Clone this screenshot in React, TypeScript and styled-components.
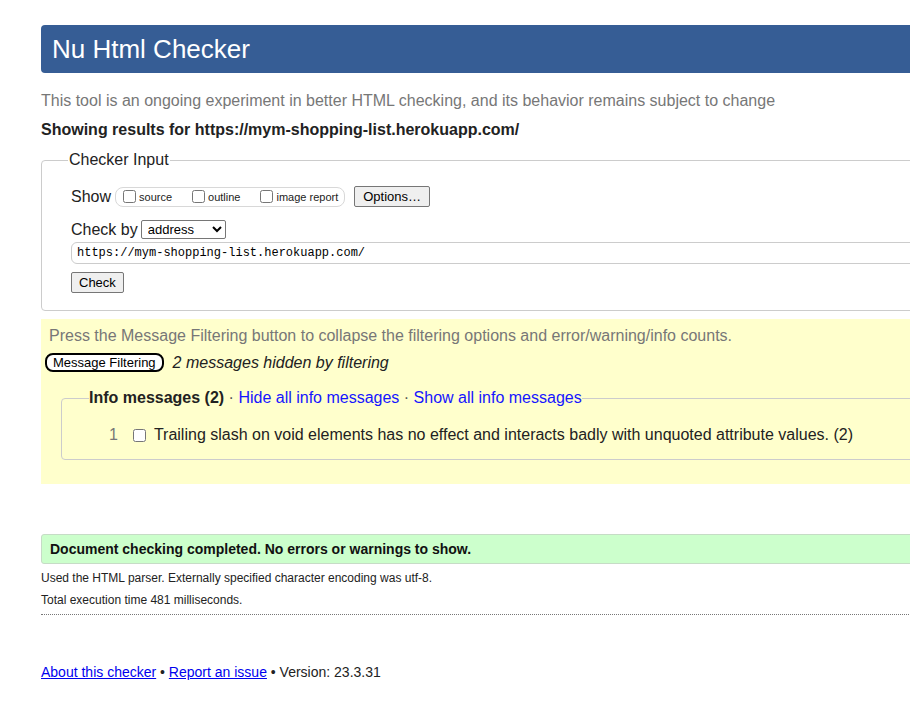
import styled, { createGlobalStyle } from "styled-components";

const GlobalStyle = createGlobalStyle`
  html, body {
    margin: 0;
    padding: 0;
    overflow: hidden;
    background: #fff;
  }
  body {
    font-family: "Liberation Sans", Arial, sans-serif;
    color: #222;
  }
`;

const Page = styled.div`
  width: 1000px;
  padding: 25px 0 0 41px;
`;

const Header = styled.h1`
  margin: 0;
  height: 48px;
  display: flex;
  align-items: center;
  padding-left: 11px;
  background: #365d95;
  border-radius: 4px 0 0 4px;
  color: #fff;
  font-size: 26px;
  font-weight: normal;
`;

const Intro = styled.p`
  margin: 19px 0 0;
  font-size: 16px;
  color: #777;
`;

const ResultsFor = styled.p`
  margin: 11px 0 0;
  font-size: 16px;
  font-weight: bold;
  color: #222;
`;

const InputFieldset = styled.fieldset`
  margin: 12px 0 0;
  padding: 6px 29px 17px;
  border: 1px solid #ccc;
  border-radius: 4px 0 0 4px;

  legend {
    font-size: 16px;
    padding: 0 1px;
    margin-left: -3px;
  }
`;

const Row = styled.div<{ $top: number }>`
  display: flex;
  align-items: center;
  margin-top: ${(p) => p.$top}px;
  font-size: 16px;
`;

const ShowOptions = styled.div`
  display: flex;
  align-items: center;
  height: 18px;
  margin-left: 4px;
  padding: 0 6px 0 7px;
  border: 1px solid #d8d8d8;
  border-radius: 8px;
`;

const SmallCheck = styled.label<{ $gap: number }>`
  display: flex;
  align-items: center;
  font-size: 11px;
  margin-right: ${(p) => p.$gap}px;

  input {
    margin: 0 3px 0 0;
    width: 13px;
    height: 13px;
  }
`;

const Button = styled.button`
  font-family: "Liberation Sans", Arial, sans-serif;
  font-size: 13px;
  color: #000;
  background: #efefef;
  border: 1px solid #767676;
  border-radius: 2px;
  padding: 2px 8px;
  height: 21px;
`;

const OptionsButton = styled(Button)`
  margin-left: 9px;
`;

const Select = styled.select`
  margin-left: 3px;
  height: 19px;
  width: 85px;
  font-family: "Liberation Sans", Arial, sans-serif;
  font-size: 13px;
  color: #000;
  background: #fff;
  border: 1px solid #767676;
  border-radius: 2px;
  padding: 0 0 0 2px;
`;

const UrlInput = styled.input`
  display: block;
  box-sizing: border-box;
  width: 100%;
  height: 22px;
  margin-top: 3px;
  padding: 0 5px;
  border: 1px solid #ccc;
  border-radius: 6px 0 0 6px;
  font-family: "Liberation Mono", "Courier New", monospace;
  font-size: 12px;
  color: #000;
`;

const CheckButton = styled(Button)`
  display: block;
  margin-top: 8px;
  padding: 2px 7px;
`;

const FilterPanel = styled.div`
  margin-top: 8px;
  background: #ffffcc;
  padding: 8px 0 24px 4px;
`;

const FilterHint = styled.p`
  margin: 0 0 0 4px;
  font-size: 16px;
  color: #777;
`;

const FilterRow = styled.div`
  display: flex;
  align-items: center;
  margin-top: 8px;
`;

const FilterButton = styled.button`
  font-family: "Liberation Sans", Arial, sans-serif;
  font-size: 13px;
  color: #000;
  background: #fff;
  border: 2px solid #000;
  border-radius: 8px;
  height: 19px;
  padding: 0 6px;
  line-height: 14px;
`;

const HiddenNote = styled.em`
  margin-left: 9px;
  font-size: 16px;
  color: #222;
`;

const InfoFieldset = styled.fieldset`
  margin: 17px 0 0 16px;
  padding: 19px 0 15px 47px;
  border: 1px solid #ccc;
  border-radius: 4px 0 0 4px;

  legend {
    font-size: 16px;
    padding: 0;
    margin-left: -20px;
  }
`;

const Strong = styled.strong`
  color: #222;
`;

const Sep = styled.span`
  color: #555;
`;

const InfoLink = styled.a`
  color: #1515ff;
  text-decoration: none;
`;

const Message = styled.div`
  display: flex;
  align-items: center;
  font-size: 16px;
  color: #222;

  input {
    margin: 0 8px 0 15px;
    width: 13px;
    height: 13px;
  }
`;

const MessageNo = styled.span`
  color: #777;
`;

const SuccessBox = styled.div`
  margin-top: 50px;
  height: 28px;
  display: flex;
  align-items: center;
  padding-left: 8px;
  background: #ccffcc;
  border: 1px solid #c6dcc6;
  border-radius: 3px 0 0 3px;
  font-size: 14px;
  font-weight: bold;
  color: #111;
`;

const Detail = styled.p<{ $top: number }>`
  margin: ${(p) => p.$top}px 0 0;
  font-size: 12px;
  color: #222;
`;

const Dotted = styled.hr`
  margin: 7px 0 0;
  border: none;
  border-top: 1px dotted #777;
`;

const Footer = styled.p`
  margin: 49px 0 0;
  font-size: 14px;
  color: #222;

  a {
    color: #0000ee;
  }
`;

export default function App() {
  return (
    <Page>
      <GlobalStyle />
      <Header>Nu Html Checker</Header>
      <Intro>
        This tool is an ongoing experiment in better HTML checking, and its
        behavior remains subject to change
      </Intro>
      <ResultsFor>Showing results for https://mym-shopping-list.herokuapp.com/</ResultsFor>

      <InputFieldset>
        <legend>Checker Input</legend>
        <Row $top={11}>
          Show
          <ShowOptions>
            <SmallCheck $gap={20}>
              <input type="checkbox" />
              source
            </SmallCheck>
            <SmallCheck $gap={20}>
              <input type="checkbox" />
              outline
            </SmallCheck>
            <SmallCheck $gap={0}>
              <input type="checkbox" />
              image report
            </SmallCheck>
          </ShowOptions>
          <OptionsButton>Options…</OptionsButton>
        </Row>
        <Row $top={13}>
          Check by
          <Select defaultValue="address">
            <option value="address">address</option>
            <option value="upload">file upload</option>
            <option value="text">text input</option>
          </Select>
        </Row>
        <UrlInput defaultValue="https://mym-shopping-list.herokuapp.com/" />
        <CheckButton>Check</CheckButton>
      </InputFieldset>

      <FilterPanel>
        <FilterHint>
          Press the Message Filtering button to collapse the filtering options and
          error/warning/info counts.
        </FilterHint>
        <FilterRow>
          <FilterButton>Message Filtering</FilterButton>
          <HiddenNote>2 messages hidden by filtering</HiddenNote>
        </FilterRow>
        <InfoFieldset>
          <legend>
            <Strong>Info messages (2)</Strong> <Sep>·</Sep>{" "}
            <InfoLink href="#">Hide all info messages</InfoLink> <Sep>·</Sep>{" "}
            <InfoLink href="#">Show all info messages</InfoLink>
          </legend>
          <Message>
            <MessageNo>1</MessageNo>
            <input type="checkbox" />
            Trailing slash on void elements has no effect and interacts badly with
            unquoted attribute values. (2)
          </Message>
        </InfoFieldset>
      </FilterPanel>

      <SuccessBox>Document checking completed. No errors or warnings to show.</SuccessBox>
      <Detail $top={7}>
        Used the HTML parser. Externally specified character encoding was utf-8.
      </Detail>
      <Detail $top={8}>Total execution time 481 milliseconds.</Detail>
      <Dotted />

      <Footer>
        <a href="#">About this checker</a> • <a href="#">Report an issue</a> •
        Version: 23.3.31
      </Footer>
    </Page>
  );
}
